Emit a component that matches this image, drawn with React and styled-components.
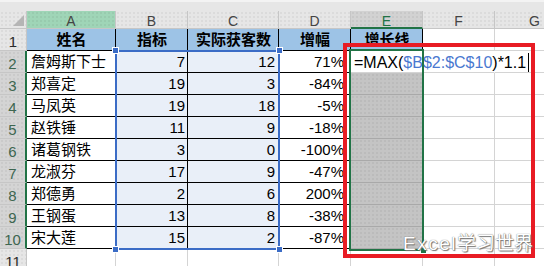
import React from 'react';
import styled, { createGlobalStyle, css } from 'styled-components';

const GlobalStyle = createGlobalStyle`
  html, body { margin: 0; padding: 0; background: #fff; overflow: hidden; }
  body { width: 544px; height: 266px; font-family: "Liberation Sans", "Noto Sans CJK SC", sans-serif; }
`;

const COLS = [27, 89, 72, 91, 72, 72, 72, 80];

const dots = css`
  background-image: radial-gradient(circle, rgba(0, 0, 0, 0.07) 0.6px, transparent 0.9px);
  background-size: 4px 4px;
`;

const gridTemplate = css`
  display: grid;
  grid-template-columns: ${COLS.map((c) => `${c}px`).join(' ')};
  grid-template-rows: 18px repeat(11, 22px);
`;

const Page = styled.div`
  position: relative;
  width: 544px;
  height: 266px;
  overflow: hidden;
  background: #fff;
`;

const TopStrip = styled.div`
  height: 11px;
  box-sizing: border-box;
  background: #e6e6e6;
  border-top: 2px solid #f3f3f3;
`;

const SheetWrap = styled.div`
  position: relative;
  width: max-content;
`;

const Sheet = styled.div`
  ${gridTemplate}
`;

const OverlayGrid = styled.div`
  ${gridTemplate}
  position: absolute;
  inset: 0;
  pointer-events: none;
  z-index: 3;
`;

const Corner = styled.div`
  box-sizing: border-box;
  display: flex;
  justify-content: flex-end;
  align-items: flex-end;
  padding: 0 2px 2px 0;
  background-color: #e6e6e6;
  border-right: 1px solid #c6c6c6;
  border-bottom: 1px solid #c6c6c6;
  ${dots}
`;

const colBg = { green: '#9fd5b7', sel: '#d2d2d2', normal: '#e6e6e6' };

const ColHead = styled.div`
  box-sizing: border-box;
  text-align: center;
  font-size: 14px;
  line-height: 18px;
  padding-top: 1px;
  color: ${(p) => (p.$tone === 'sel' ? '#217346' : '#444')};
  background-color: ${(p) => colBg[p.$tone || 'normal']};
  border-right: 1px solid #c6c6c6;
  border-bottom: ${(p) => (p.$tone === 'sel' ? '2px solid #217346' : '1px solid #c6c6c6')};
  ${dots}
`;

const RowHead = styled.div`
  box-sizing: border-box;
  text-align: center;
  font-size: 15px;
  line-height: 21px;
  padding-top: 2px;
  color: ${(p) => (p.$sel ? '#3d6650' : '#2a2a2a')};
  background-color: ${(p) => (p.$sel ? '#d4d4d4' : '#e6e6e6')};
  border-bottom: 1px solid #c6c6c6;
  border-right: ${(p) => (p.$sel ? '2px solid #217346' : '1px solid #c6c6c6')};
  ${dots}
`;

const kinds = {
  head: { bg: '#9dc3e6', line: '#000' },
  data: { bg: '#fff', line: '#000' },
  ref: { bg: '#e9eff8', line: '#000' },
  grey: { bg: '#c4c4c4', line: '#a9a9a9' },
  empty: { bg: '#fff', line: '#d4d4d4' },
};

const Cell = styled.div`
  box-sizing: border-box;
  font-size: 15px;
  line-height: 22px;
  padding: 0 ${(p) => p.$padR ?? 3}px 0 4px;
  text-align: ${(p) => p.$align || 'left'};
  font-weight: ${(p) => (p.$bold ? 700 : 400)};
  color: #000;
  white-space: nowrap;
  overflow: hidden;
  background-color: ${(p) => kinds[p.$kind].bg};
  border-right: 1px solid ${(p) => (p.$noRight ? 'transparent' : kinds[p.$kind].line)};
  border-bottom: 1px solid ${(p) => kinds[p.$kind].line};
  ${(p) => p.$kind === 'grey' && dots}
`;

const FormulaCell = styled.div`
  position: relative;
  z-index: 2;
  box-sizing: border-box;
  font-size: 16px;
  line-height: 22px;
  padding: 1px 0 0 3px;
  white-space: nowrap;
  overflow: visible;
  color: #000;
  background: #fff;
  border-bottom: 1px solid #d4d4d4;
`;

const Ref = styled.span`
  color: #4a78d0;
`;

const Caret = styled.span`
  display: inline-block;
  width: 1px;
  height: 19px;
  margin-left: 2px;
  vertical-align: -4px;
  background: #000;
`;

const RefRange = styled.div`
  grid-column: 3 / 5;
  grid-row: 3 / 12;
  margin: -1px -1px -1px -1px;
  position: relative;
  border: 2px solid #3b6cc6;
`;

const Handle = styled.span`
  position: absolute;
  width: 5px;
  height: 5px;
  background: #3b6cc6;
  border: 1px solid #fff;
  ${(p) => (p.$v === 't' ? 'top: -5px;' : 'bottom: -5px;')}
  ${(p) => (p.$h === 'l' ? 'left: -5px;' : 'right: -5px;')}
`;

const SelRange = styled.div`
  grid-column: 6 / 7;
  grid-row: 3 / 12;
  margin: -2px -1px -2px -2px;
  position: relative;
  border: 2px solid #217346;
`;

const FillHandle = styled.span`
  position: absolute;
  right: -5px;
  bottom: -5px;
  width: 5px;
  height: 5px;
  background: #217346;
  border: 1px solid #fff;
`;

const Annotation = styled.div`
  position: absolute;
  left: 343px;
  top: 43px;
  width: 192px;
  height: 215px;
  box-sizing: border-box;
  border: 4px solid #e81c24;
  z-index: 5;
  pointer-events: none;
`;

const Watermark = styled.div`
  position: absolute;
  left: 403px;
  top: 234px;
  z-index: 6;
  font-size: 19px;
  line-height: 19px;
  white-space: nowrap;
  color: #fff;
  text-shadow: 0 0 1px #555, 1px 1px 1px #777;
`;

const Latin = styled.span`
  letter-spacing: 1.5px;
`;

const names = ['詹姆斯下士', '郑喜定', '马凤英', '赵铁锤', '诸葛钢铁', '龙淑芬', '郑德勇', '王钢蛋', '宋大莲'];
const target = [7, 19, 19, 11, 3, 17, 2, 13, 15];
const actual = [12, 3, 18, 9, 0, 9, 6, 8, 2];
const growth = ['71%', '-84%', '-5%', '-18%', '-100%', '-47%', '200%', '-38%', '-87%'];

const letters = ['A', 'B', 'C', 'D', 'E', 'F', 'G'];
const tones = { A: 'green', E: 'sel' };

export default function App() {
  return (
    <Page>
      <GlobalStyle />
      <TopStrip />
      <SheetWrap>
        <Sheet>
          <Corner>
            <svg width="11" height="11" viewBox="0 0 11 11">
              <polygon points="11,0 11,11 0,11" fill="#b5b5b5" />
            </svg>
          </Corner>
          {letters.map((l) => (
            <ColHead key={l} $tone={tones[l]}>{l}</ColHead>
          ))}

          <RowHead>1</RowHead>
          <Cell $kind="head" $bold $align="center">姓名</Cell>
          <Cell $kind="head" $bold $align="center">指标</Cell>
          <Cell $kind="head" $bold $align="center">实际获客数</Cell>
          <Cell $kind="head" $bold $align="center">增幅</Cell>
          <Cell $kind="head" $bold $align="center">增长线</Cell>
          <Cell $kind="empty" />
          <Cell $kind="empty" />

          {names.map((n, i) => (
            <React.Fragment key={n}>
              <RowHead $sel>{i + 2}</RowHead>
              <Cell $kind="data">{n}</Cell>
              <Cell $kind="ref" $align="right" $padR={2}>{target[i]}</Cell>
              <Cell $kind="ref" $align="right" $padR={3}>{actual[i]}</Cell>
              <Cell $kind="data" $align="right" $padR={6}>{growth[i]}</Cell>
              {i === 0 ? (
                <FormulaCell>
                  =MAX(<Ref>$B$2:$C$10</Ref>)*1.1<Caret />
                </FormulaCell>
              ) : (
                <Cell $kind="grey" />
              )}
              <Cell $kind="empty" $noRight={i === 0} />
              <Cell $kind="empty" $noRight={i === 0} />
            </React.Fragment>
          ))}

          <RowHead>11</RowHead>
          {letters.map((l) => (
            <Cell key={l} $kind="empty" />
          ))}
        </Sheet>
        <OverlayGrid>
          <RefRange>
            <Handle $v="t" $h="l" />
            <Handle $v="t" $h="r" />
            <Handle $v="b" $h="l" />
            <Handle $v="b" $h="r" />
          </RefRange>
          <SelRange>
            <FillHandle />
          </SelRange>
        </OverlayGrid>
      </SheetWrap>
      <Annotation />
      <Watermark>
        <Latin>Excel</Latin>学习世界
      </Watermark>
    </Page>
  );
}
